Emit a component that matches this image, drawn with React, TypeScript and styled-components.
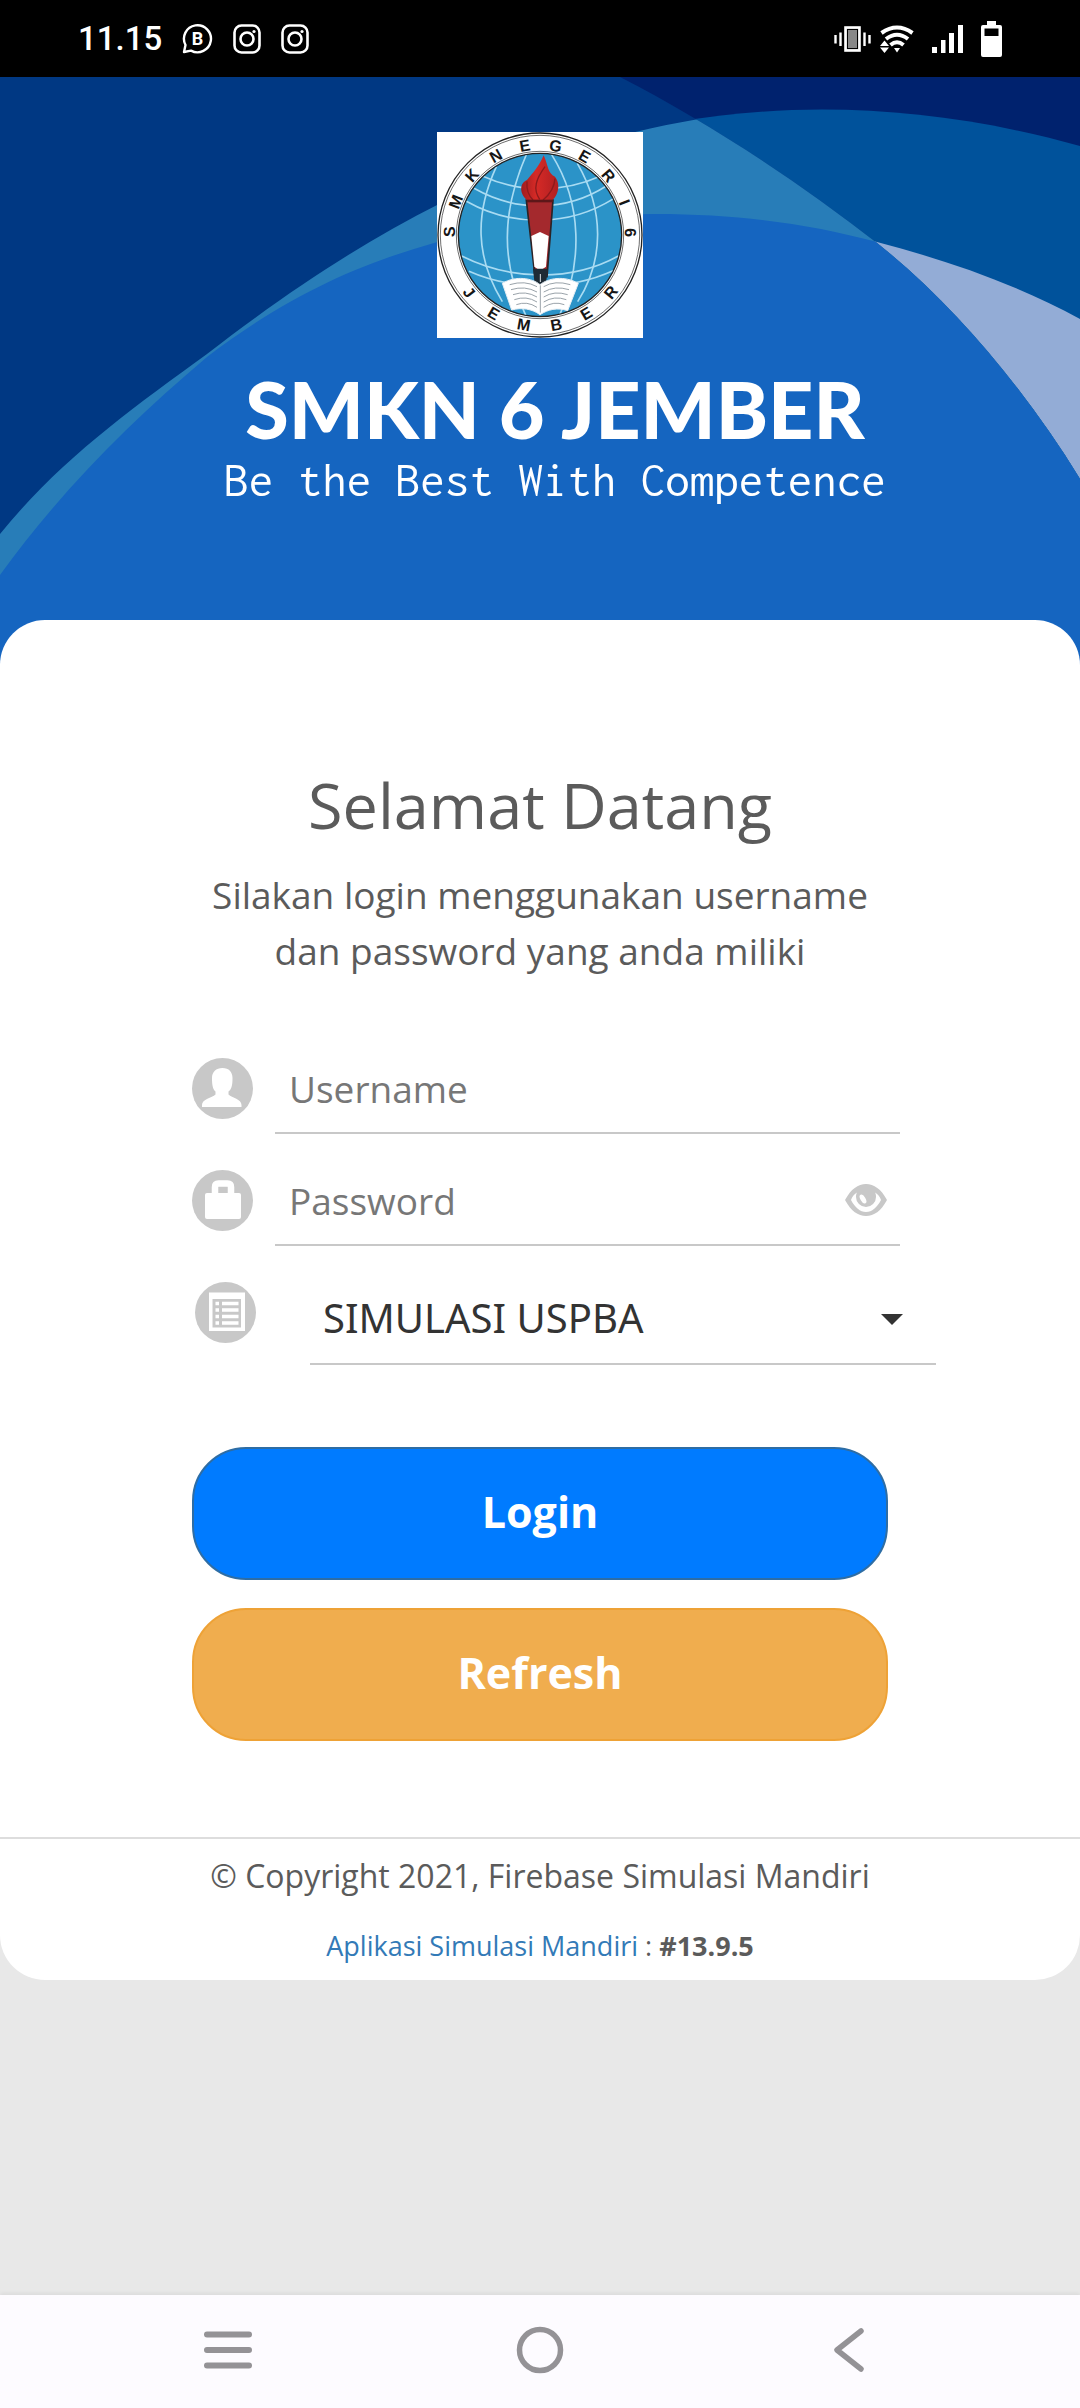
import React, { useState } from "react";
import styled, { createGlobalStyle } from "styled-components";

const GlobalStyle = createGlobalStyle`
  *, *::before, *::after { box-sizing: border-box; }
  html, body { margin: 0; padding: 0; }
  body { background: #e8e8e8; font-family: "Open Sans", "Noto Sans", sans-serif; color: #5b5b5b; }
`;

const Page = styled.div`
  display: flex;
  flex-direction: column;
  min-height: 100vh;
`;

const StatusBar = styled.header`
  display: flex;
  align-items: center;
  justify-content: space-between;
  height: 77px;
  padding: 0 78px;
  background: #000;
  color: #fff;
`;

const StatusGroup = styled.div<{ $gap: number }>`
  display: flex;
  align-items: center;
  gap: ${(p) => p.$gap}px;
`;

const Clock = styled.time`
  font: 500 33px/40px Roboto, sans-serif;
`;

const Hero = styled.section`
  position: relative;
  display: flex;
  flex-direction: column;
  align-items: center;
  padding: 55px 0 160px;
  background: #00226e;
`;

const HeroBackdrop = styled.svg`
  position: absolute;
  inset: 0;
  width: 100%;
  height: 100%;
`;

const Emblem = styled.svg`
  position: relative;
  display: block;
  width: 206px;
  height: 206px;
`;

const Brand = styled.div`
  position: relative;
  padding-left: 30px;
  text-align: center;
  color: #fff;
`;

const SchoolName = styled.h1`
  margin: 29px 0 4px;
  font: 900 79px/84px Lato, sans-serif;
`;

const Motto = styled.p`
  margin: 0;
  font: 400 49px/50px Inconsolata, "DejaVu Sans Mono", monospace;
`;

const Card = styled.main`
  position: relative;
  margin-top: -45px;
  padding-top: 140px;
  border-radius: 45px;
  background: #fff;
`;

const Column = styled.div`
  width: 100%;
  max-width: 696px;
  margin: 0 auto;
`;

const Welcome = styled.h2`
  margin: 0 0 17px;
  font-size: 63px;
  line-height: 90px;
  font-weight: 400;
  text-align: center;
`;

const Hint = styled.p`
  margin: 0 0 65px;
  font-size: 37px;
  line-height: 56px;
  text-align: center;
`;

const Form = styled.form`
  display: flex;
  flex-direction: column;
`;

const Fields = styled.div`
  display: flex;
  flex-direction: column;
  gap: 22px;
  margin-bottom: 82px;
`;

const Field = styled.div<{ $indented?: boolean }>`
  display: flex;
  align-items: flex-start;
  gap: ${(p) => (p.$indented ? 54 : 22)}px;
  margin: ${(p) => (p.$indented ? "0 -48px 0 3px" : "0 -12px 0 0")};
`;

const FieldLabel = styled.label`
  display: flex;
  align-items: center;
  height: 88px;

  svg { display: block; width: 61px; height: 61px; }
`;

const Control = styled.div`
  display: flex;
  flex: 1;
  align-items: center;
  min-width: 0;
  border-bottom: 2px solid #c8c8c8;
`;

const TextInput = styled.input`
  flex: 1;
  min-width: 0;
  height: 88px;
  padding: 0 14px;
  border: 0;
  outline: 0;
  background: transparent;
  color: #333;
  font: 400 37px/50px "Open Sans", "Noto Sans", sans-serif;

  &::placeholder { color: #777; opacity: 1; }
`;

const EyeButton = styled.button`
  display: flex;
  padding: 0 13px;
  border: 0;
  background: none;

  svg { display: block; width: 42px; height: 32px; }
`;

const SelectBox = styled.div`
  display: grid;
  flex: 1;
  align-items: center;
  border-bottom: 2px solid #c8c8c8;

  > * { grid-area: 1 / 1; }
`;

const ExamSelect = styled.select`
  width: 100%;
  height: 95px;
  padding: 5px 60px 0 13px;
  border: 0;
  outline: 0;
  appearance: none;
  background: transparent;
  color: #333;
  font: 400 40px/56px "Noto Sans", sans-serif;
`;

const Caret = styled.svg`
  justify-self: end;
  width: 22px;
  height: 11px;
  margin: 7px 33px 0 0;
  pointer-events: none;
`;

const ActionButton = styled.button<{ $tone: "primary" | "warning" }>`
  height: 133px;
  padding: 0 0 4px;
  border: 2px solid ${(p) => (p.$tone === "primary" ? "#2e6da4" : "#eea236")};
  border-radius: 54px;
  background: ${(p) => (p.$tone === "primary" ? "#007bff" : "#f0ad4e")};
  color: #fff;
  font: 700 43px/60px "Open Sans", "Noto Sans", sans-serif;

  & + & { margin-top: 28px; }
`;

const Footer = styled.footer`
  margin-top: 96px;
  padding: 15px 0;
  border-top: 2px solid #ddd;
  text-align: center;
`;

const Copyright = styled.p`
  margin: 0 0 29px;
  font-size: 32px;
  line-height: 44px;
`;

const Version = styled.p`
  margin: 0;
  font-size: 27px;
  line-height: 38px;
`;

const AppLink = styled.a`
  color: #337ab7;
  text-decoration: none;
`;

const NavBar = styled.nav`
  display: flex;
  align-items: center;
  justify-content: space-around;
  height: 113px;
  margin-top: auto;
  padding: 0 72px 3px;
  background: #fdfbff;
  box-shadow: 0 -2px 4px rgba(0, 0, 0, 0.06);
`;

const NavButton = styled.button`
  display: flex;
  padding: 0;
  border: 0;
  background: none;

  svg { display: block; width: 52px; height: 52px; }
`;

const TOP_LETTERS = "SMKNEGERI6".split("");
const BOTTOM_LETTERS = "JEMBER".split("");

const WavesBackdrop = () => (
  <HeroBackdrop viewBox="0 77 1080 588" preserveAspectRatio="none" aria-hidden="true">
    <defs>
      <clipPath id="sweep">
        <path d="M0 77H620C706 121 796 180 877 243C955 305 1026 391 1080 479V665H0Z" />
      </clipPath>
    </defs>
    <path fill="#00529b" d="M600 665V140C740 99 910 98 1080 146V665Z" />
    <path fill="#93acd6" d="M655 665V214C740 214 810 224 877 242C950 261 1020 286 1080 319V665Z" />
    <g clipPath="url(#sweep)">
      <path fill="#003883" d="M0 77H1080V665H0Z" />
      <path fill="#287db8" d="M0 534C60 460 130 410 207 354C290 290 360 244 441 203C560 145 690 109 820 109C910 109 1000 122 1080 146V665H0Z" />
      <path fill="#1565c0" d="M0 575C60 492 130 422 207 357C290 294 360 264 434 243C510 222 580 214 655 214C740 214 810 224 877 242C950 261 1020 286 1080 319V665H0Z" />
    </g>
  </HeroBackdrop>
);

const SchoolEmblem = () => (
  <Emblem viewBox="54 36 618 618" role="img" aria-label="SMK Negeri 6 Jember">
    <defs>
      <clipPath id="globe"><circle cx="363" cy="345" r="243" /></clipPath>
      <linearGradient id="flame" x1="0" x2="1">
        <stop offset="0" stopColor="#9f1d20" />
        <stop offset="0.4" stopColor="#d62a26" />
        <stop offset="1" stopColor="#b01f22" />
      </linearGradient>
    </defs>
    <rect x="54" y="36" width="618" height="618" fill="#fff" />
    <g fill="none" stroke="#222">
      <circle cx="363" cy="345" r="306" strokeWidth="4" />
      <circle cx="363" cy="345" r="299" strokeWidth="2" />
      <circle cx="363" cy="345" r="251" strokeWidth="2" />
    </g>
    <circle cx="363" cy="345" r="245" fill="#2b93c8" stroke="#222" strokeWidth="4" />
    <g clipPath="url(#globe)" fill="none" stroke="#a8dbf2" strokeWidth="5">
      <path d="M232 140C168 280 168 410 250 545M322 104C246 280 246 430 322 590M398 104C490 250 492 430 420 590M475 130C556 270 556 420 476 545" />
      <path d="M190 168C300 218 430 220 545 168M165 205C290 276 440 276 562 198M142 244C280 322 450 320 584 236M128 408C280 484 460 484 598 408M150 454C280 512 450 512 582 452" />
    </g>
    <path d="M322 240H402L384 470H348Z" fill="#a4292d" stroke="#2b2326" strokeWidth="5" />
    <path d="M337 348L363 336L389 348L381 440Q363 456 346 440Z" fill="#fff" />
    <path d="M374 106C388 138 386 160 408 170C428 196 414 230 400 240H324C304 224 298 192 324 180C342 158 360 140 374 106Z" fill="url(#flame)" />
    <path d="M378 140C352 176 340 206 362 238M408 176C406 204 394 222 372 240M324 184C322 206 328 226 342 240" fill="none" stroke="#8d1a1c" strokeWidth="4" />
    <path d="M324 243H402" stroke="#5d1719" strokeWidth="8" />
    <path d="M342 446H386L382 484L364 498L346 484Z" fill="#1e2b35" />
    <path d="M250 490C290 466 340 474 363 494C388 474 436 466 478 490L446 572C414 562 388 568 363 584C338 566 308 562 278 570Z" fill="#fff" stroke="#e6eef4" strokeWidth="3" />
    <g fill="none" stroke="#9aa3aa" strokeWidth="3">
      <path d="M272 494Q318 480 354 500M276 509Q318 496 354 516M282 524Q320 511 354 531M286 539Q322 526 354 546M292 554Q324 542 354 562" />
      <path d="M454 494Q408 480 374 500M450 509Q408 496 374 516M446 524Q406 511 374 531M442 539Q406 526 374 546M436 554Q404 542 374 562" />
      <path d="M364 496V578" />
    </g>
    <path d="M364 462V486" stroke="#dfe6ea" strokeWidth="3" />
    <g fill="#161616" fontFamily="Liberation Sans, sans-serif" fontWeight="700" fontSize="48" textAnchor="middle">
      {TOP_LETTERS.map((letter, i) => (
        <text key={i} x="363" y="90" transform={`rotate(${-88 + i * 19.6} 363 345)`}>{letter}</text>
      ))}
      {BOTTOM_LETTERS.map((letter, i) => (
        <text key={i} x="363" y="635" transform={`rotate(${51 - i * 20.4} 363 345)`}>{letter}</text>
      ))}
    </g>
  </Emblem>
);

const InstagramGlyph = () => (
  <svg width="28" height="30" viewBox="0 0 28 30" fill="none" stroke="#fff" strokeWidth="2.6" aria-hidden="true">
    <rect x="1.5" y="1.5" width="25" height="27" rx="7" />
    <circle cx="14" cy="15" r="6.5" />
    <circle cx="21" cy="7.5" r="1.6" fill="#fff" stroke="none" />
  </svg>
);

const BusinessChatGlyph = () => (
  <svg width="31" height="31" viewBox="0 0 31 31" aria-hidden="true">
    <path d="M2 29L3.5 22A13.5 13.5 0 1 1 9 27.6Z" fill="none" stroke="#fff" strokeWidth="2.4" strokeLinejoin="round" />
    <text x="15.5" y="22" fill="#fff" fontFamily="Roboto, sans-serif" fontWeight="700" fontSize="18" textAnchor="middle">B</text>
  </svg>
);

const VibrateGlyph = () => (
  <svg width="37" height="26" viewBox="0 0 37 26" aria-hidden="true">
    <rect x="11.5" y="1.5" width="14" height="23" fill="#888" stroke="#fff" strokeWidth="2.6" />
    <rect x="13.5" y="3.5" width="10" height="19" fill="#888" stroke="#000" />
    <path d="M1.5 9V17.5M6.5 6.5V20M30.5 6.5V20M35.5 9V17.5" stroke="#fff" strokeWidth="2.4" />
  </svg>
);

const WifiGlyph = () => (
  <svg width="34" height="28" viewBox="0 0 34 28" aria-hidden="true">
    <g fill="none" stroke="#fff" strokeWidth="4">
      <path d="M1.5 8Q17-3 32.5 8" />
      <path d="M6 14Q17 5.500 28 14" />
      <path d="M10.500 20Q17 14.500 23.500 20" />
    </g>
    <path d="M14 23H20L17 27.500ZM0 21L4.500 15.500L9 21ZM0 22.500H9L4.500 28Z" fill="#fff" />
  </svg>
);

const SignalGlyph = () => (
  <svg width="31" height="28" viewBox="0 0 31 28" fill="#fff" aria-hidden="true">
    <path d="M0 22H5V28H0ZM9 15H13.500V28H9ZM17 8H22V28H17ZM26 0H31V28H26Z" />
  </svg>
);

const BatteryGlyph = () => (
  <svg width="21" height="36" viewBox="0 0 21 36" aria-hidden="true">
    <path fill="#fff" d="M6 0H15V4H19Q21 4 21 6V34Q21 36 19 36H2Q0 36 0 34V6Q0 4 2 4H6Z" />
    <path fill="#000" d="M3.500 7.500H17.500V15H3.500Z" />
  </svg>
);

const UserGlyph = () => (
  <svg viewBox="0 0 61 61" aria-hidden="true">
    <circle cx="30.5" cy="30.5" r="30.5" fill="#c8c8c8" />
    <path fill="#fff" d="M30.500 10C37 10 40.500 14 40.500 20C40.500 26 40 31 36.500 33.500V36.500C40 40 49.500 41 49.500 47V49H10V47C10 41 20 40 23.500 36.500V33.500C20.500 31 20 26 20 20C20 14 24 10 30.500 10Z" />
  </svg>
);

const LockGlyph = () => (
  <svg viewBox="0 0 61 61" aria-hidden="true">
    <circle cx="30.5" cy="30.5" r="30.5" fill="#c8c8c8" />
    <rect x="13" y="23" width="36" height="26" rx="2" fill="#fff" />
    <path d="M23 25V17Q23 13.500 26.500 13.500H35.500Q39 13.500 39 17V25" fill="none" stroke="#fff" strokeWidth="6.500" />
  </svg>
);

const ListGlyph = () => (
  <svg viewBox="0 0 61 61" aria-hidden="true">
    <circle cx="30.5" cy="30.5" r="30.5" fill="#c8c8c8" />
    <path fill="#fff" fillRule="evenodd" d="M14 10.500H50V49H14ZM17.500 17H46V45.500H17.500Z" />
    <path d="M20.500 21.500H24M27 21.500H43.500M20.500 28H24M27 28H43.500M20.500 34.500H24M27 34.500H43.500M20.500 41H24M27 41H43.500" stroke="#fff" strokeWidth="3.400" />
  </svg>
);

const EyeGlyph = () => (
  <svg viewBox="0 0 42 32" aria-hidden="true">
    <path fill="#c8c8c8" fillRule="evenodd" d="M0 16C6 5 13 0 21 0C29 0 36 5 42 16C36 27 29 32 21 32C13 32 6 27 0 16ZM6 16C10 23.500 15 28 21 28C27 28 32 23.500 36 16C35 13 33 10 30 8.500C31 10 31 12 31 13A10 10 0 0 1 11 13C11 12 11 10 12 8.500C9 10 7 13 6 16Z" />
    <ellipse cx="18" cy="15" rx="2.500" ry="5" fill="#fff" transform="rotate(-30 18 15)" />
  </svg>
);

export default function App() {
  const [visible, setVisible] = useState(false);

  return (
    <Page>
      <GlobalStyle />
      <StatusBar>
        <StatusGroup $gap={20}>
          <Clock>11.15</Clock>
          <BusinessChatGlyph />
          <InstagramGlyph />
          <InstagramGlyph />
        </StatusGroup>
        <StatusGroup $gap={18}>
          <StatusGroup $gap={9}>
            <VibrateGlyph />
            <WifiGlyph />
          </StatusGroup>
          <SignalGlyph />
          <BatteryGlyph />
        </StatusGroup>
      </StatusBar>

      <Hero>
        <WavesBackdrop />
        <SchoolEmblem />
        <Brand>
          <SchoolName>SMKN 6 JEMBER</SchoolName>
          <Motto>Be the Best With Competence</Motto>
        </Brand>
      </Hero>

      <Card>
        <Column>
          <Welcome>Selamat Datang</Welcome>
          <Hint>
            Silakan login menggunakan username
            <br />
            dan password yang anda miliki
          </Hint>
          <Form onSubmit={(e) => e.preventDefault()}>
            <Fields>
              <Field>
                <FieldLabel htmlFor="username" aria-label="Username"><UserGlyph /></FieldLabel>
                <Control>
                  <TextInput id="username" type="text" placeholder="Username" />
                </Control>
              </Field>
              <Field>
                <FieldLabel htmlFor="password" aria-label="Password"><LockGlyph /></FieldLabel>
                <Control>
                  <TextInput id="password" type={visible ? "text" : "password"} placeholder="Password" />
                  <EyeButton type="button" aria-label="Tampilkan password" onClick={() => setVisible(!visible)}>
                    <EyeGlyph />
                  </EyeButton>
                </Control>
              </Field>
              <Field $indented>
                <FieldLabel htmlFor="exam" aria-label="Simulasi"><ListGlyph /></FieldLabel>
                <SelectBox>
                  <ExamSelect id="exam">
                    <option>SIMULASI USPBA</option>
                  </ExamSelect>
                  <Caret viewBox="0 0 22 11" aria-hidden="true"><path d="M0 0H22L11 11Z" fill="#333" /></Caret>
                </SelectBox>
              </Field>
            </Fields>
            <ActionButton type="submit" $tone="primary">Login</ActionButton>
            <ActionButton type="button" $tone="warning">Refresh</ActionButton>
          </Form>
        </Column>
        <Footer>
          <Copyright>© Copyright 2021, Firebase Simulasi Mandiri</Copyright>
          <Version>
            <AppLink href="#aplikasi">Aplikasi Simulasi Mandiri</AppLink> : <b>#13.9.5</b>
          </Version>
        </Footer>
      </Card>

      <NavBar>
        <NavButton aria-label="Recent apps">
          <svg viewBox="0 0 52 52"><path d="M5 10.500H47M5 26H47M5 41.500H47" stroke="#949296" strokeWidth="6" strokeLinecap="round" /></svg>
        </NavButton>
        <NavButton aria-label="Home">
          <svg viewBox="0 0 52 52"><circle cx="26" cy="26" r="20.500" fill="none" stroke="#949296" strokeWidth="5.500" /></svg>
        </NavButton>
        <NavButton aria-label="Back">
          <svg viewBox="0 0 52 52"><path d="M35 7L11 26L35 45" fill="none" stroke="#949296" strokeWidth="5.500" strokeLinecap="round" strokeLinejoin="round" /></svg>
        </NavButton>
      </NavBar>
    </Page>
  );
}
